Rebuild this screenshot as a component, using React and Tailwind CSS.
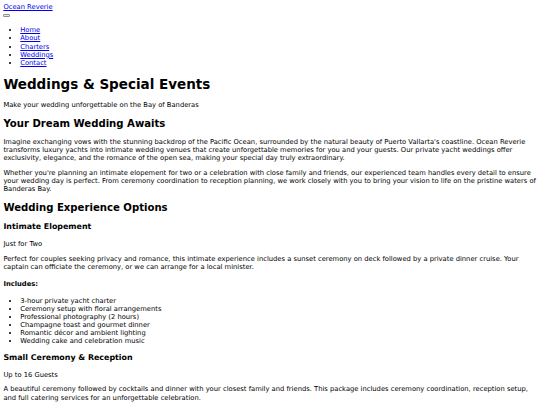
export default function App() {
  const elopement = [
    "3-hour private yacht charter",
    "Ceremony setup with floral arrangements",
    "Professional photography (2 hours)",
    "Champagne toast and gourmet dinner",
    "Romantic décor and ambient lighting",
    "Wedding cake and celebration music",
  ];

  return (
    <div className="min-h-screen bg-white p-[3.375px] text-black text-[6.75px] leading-[1.2] font-['DejaVu_Sans',sans-serif]">
      <header>
        <div>
          <a href="#" className="text-[#0000ee] underline">Ocean Reverie</a>
        </div>
        <div className="h-[8.1px] pt-[2.6px]">
          <span className="block w-[6.75px] h-[2.7px] rounded-[1px] border border-[#8f8f8f] bg-[#e9e9ed]" />
        </div>
        <nav>
          <ul className="my-[6.75px] pl-[16.875px] list-disc">
            <li><a href="#" className="text-[#0000ee] underline">Home</a></li>
            <li><a href="#" className="text-[#0000ee] underline">About</a></li>
            <li><a href="#" className="text-[#0000ee] underline">Charters</a></li>
            <li><a href="#" className="text-[#0000ee] underline">Weddings</a></li>
            <li><a href="#" className="text-[#0000ee] underline">Contact</a></li>
          </ul>
        </nav>
      </header>

      <main>
        <h1 className="my-[9.05px] text-[13.5px] font-bold">Weddings &amp; Special Events</h1>
        <p className="my-[6.75px]">Make your wedding unforgettable on the Bay of Banderas</p>

        <h2 className="my-[8.4px] text-[10.125px] font-bold">Your Dream Wedding Awaits</h2>
        <p className="my-[6.75px]">
          Imagine exchanging vows with the stunning backdrop of the Pacific Ocean, surrounded by the natural beauty of Puerto Vallarta's coastline. Ocean Reverie transforms luxury yachts into intimate wedding venues that create unforgettable memories for you and your guests. Our private yacht weddings offer exclusivity, elegance, and the romance of the open sea, making your special day truly extraordinary.
        </p>
        <p className="my-[6.75px]">
          Whether you're planning an intimate elopement for two or a celebration with close family and friends, our experienced team handles every detail to ensure your wedding day is perfect. From ceremony coordination to reception planning, we work closely with you to bring your vision to life on the pristine waters of Banderas Bay.
        </p>

        <h2 className="my-[8.4px] text-[10.125px] font-bold">Wedding Experience Options</h2>

        <h3 className="my-[7.9px] text-[7.9px] font-bold">Intimate Elopement</h3>
        <p className="my-[6.75px]">Just for Two</p>
        <p className="my-[6.75px]">
          Perfect for couples seeking privacy and romance, this intimate experience includes a sunset ceremony on deck followed by a private dinner cruise. Your captain can officiate the ceremony, or we can arrange for a local minister.
        </p>
        <h4 className="my-[9px] font-bold">Includes:</h4>
        <ul className="my-[6.75px] pl-[16.875px] list-disc">
          {elopement.map((t) => (
            <li key={t}>{t}</li>
          ))}
        </ul>

        <h3 className="my-[7.9px] text-[7.9px] font-bold">Small Ceremony &amp; Reception</h3>
        <p className="my-[6.75px]">Up to 16 Guests</p>
        <p className="my-[6.75px]">
          A beautiful ceremony followed by cocktails and dinner with your closest family and friends. This package includes ceremony coordination, reception setup, and full catering services for an unforgettable celebration.
        </p>
      </main>
    </div>
  );
}
